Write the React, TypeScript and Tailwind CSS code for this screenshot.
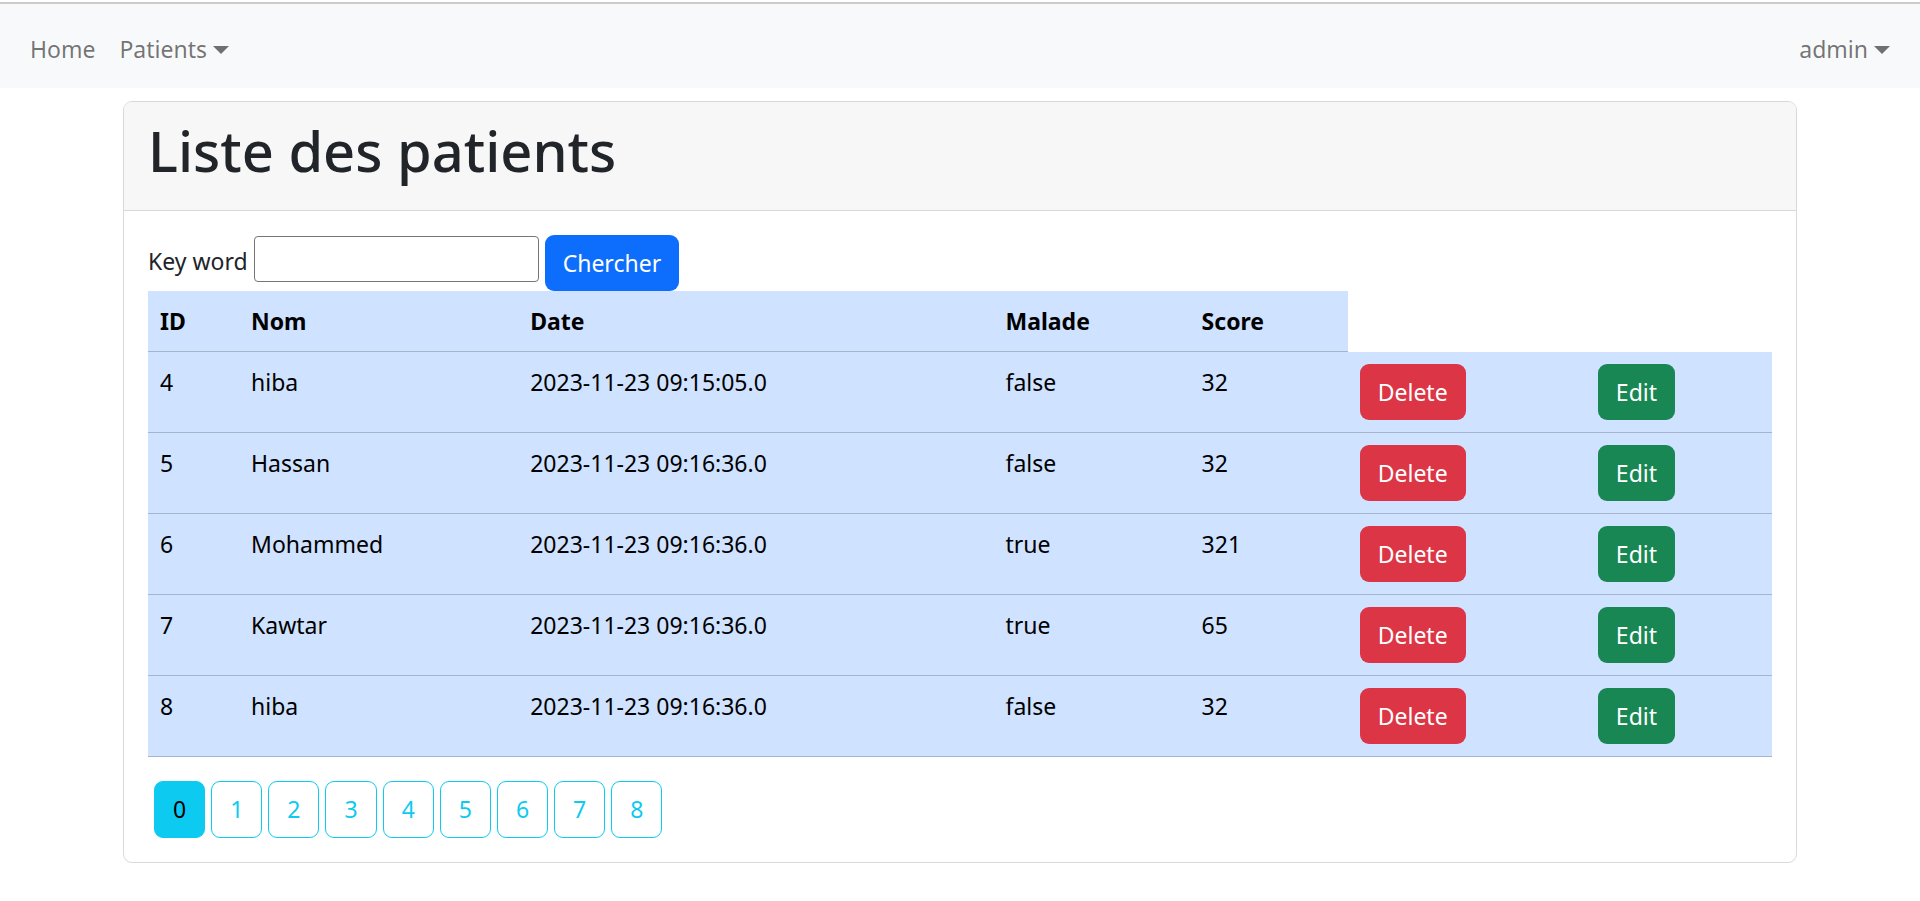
import React from 'react';

const patients = [
  { id: 4, nom: 'hiba', date: '2023-11-23 09:15:05.0', malade: 'false', score: 32 },
  { id: 5, nom: 'Hassan', date: '2023-11-23 09:16:36.0', malade: 'false', score: 32 },
  { id: 6, nom: 'Mohammed', date: '2023-11-23 09:16:36.0', malade: 'true', score: 321 },
  { id: 7, nom: 'Kawtar', date: '2023-11-23 09:16:36.0', malade: 'true', score: 65 },
  { id: 8, nom: 'hiba', date: '2023-11-23 09:16:36.0', malade: 'false', score: 32 },
];

const pages = [0, 1, 2, 3, 4, 5, 6, 7, 8];

const Caret = () => (
  <span className="ml-[6px] inline-block h-0 w-0 border-x-[8px] border-t-[8px] border-x-transparent border-t-current align-[4px]" />
);

const App = () => {
  const th = 'bg-[#cfe2ff] border-b border-[#a6b5cc] px-[12px] py-[12px] text-left font-bold text-black';
  const td = 'bg-[#cfe2ff] border-b border-[#a6b5cc] px-[12px] py-[12px] align-top text-black';

  return (
    <div className="min-h-screen bg-white text-[23px] leading-[36px] text-[#212529] font-['Segoe_UI','Noto_Sans',sans-serif]">
      {/* navbar */}
      <div className="mt-[2px] border-t-2 border-[#cccccc]">
        <nav className="flex h-[84px] items-center justify-between bg-[#f8f9fa] px-[18px] pt-[6px]">
          <div className="flex items-center">
            <a className="px-[12px] py-[12px] text-black/55">Home</a>
            <a className="px-[12px] py-[12px] text-black/55">
              Patients
              <Caret />
            </a>
          </div>
          <a className="px-[12px] py-[12px] text-black/55">
            admin
            <Caret />
          </a>
        </nav>
      </div>

      <div className="mx-auto mt-[13px] w-[1674px] rounded-[9px] border-[1.5px] border-[#d9d9d9]">
        <div className="rounded-t-[8px] border-b-[1.5px] border-[#d9d9d9] bg-[#f7f7f7] px-[24px] py-[12px]">
          <h1 className="mb-[12px] text-[56px] font-medium leading-[72px] text-[#212529]">Liste des patients</h1>
        </div>

        <div className="p-[24px]">
          <form className="flex items-start gap-[6px]">
            <label className="mt-[8px]">Key word</label>
            <input
              type="text"
              className="mt-[1px] h-[46px] w-[285px] rounded-[4px] border-[1.5px] border-[#767676] bg-white px-[3px]"
            />
            <button type="button" className="h-[56px] rounded-[9px] bg-[#0d6efd] px-[18px] text-white">
              Chercher
            </button>
          </form>

          <table className="w-full table-fixed border-collapse">
            <colgroup>
              <col className="w-[91px]" />
              <col className="w-[279px]" />
              <col className="w-[475px]" />
              <col className="w-[196px]" />
              <col className="w-[158px]" />
              <col className="w-[238px]" />
              <col className="w-[186px]" />
            </colgroup>
            <thead>
              <tr>
                <th className={th}>ID</th>
                <th className={th}>Nom</th>
                <th className={th}>Date</th>
                <th className={th}>Malade</th>
                <th className={th}>Score</th>
              </tr>
            </thead>
            <tbody>
              {patients.map((p) => (
                <tr key={p.id}>
                  <td className={td}>{p.id}</td>
                  <td className={td}>{p.nom}</td>
                  <td className={td}>{p.date}</td>
                  <td className={td}>{p.malade}</td>
                  <td className={td}>{p.score}</td>
                  <td className={td}>
                    <button className="h-[56px] rounded-[9px] bg-[#dc3545] px-[18px] text-white">Delete</button>
                  </td>
                  <td className={td}>
                    <button className="h-[56px] rounded-[9px] bg-[#198754] px-[18px] text-white">Edit</button>
                  </td>
                </tr>
              ))}
            </tbody>
          </table>

          <ul className="mt-[24px] flex">
            {pages.map((n) => (
              <li key={n}>
                <button
                  className={
                    n === 0
                      ? 'ml-[6px] h-[57px] rounded-[9px] border-[1.5px] border-[#0dcaf0] bg-[#0dcaf0] px-[18px] text-black'
                      : 'ml-[6px] h-[57px] rounded-[9px] border-[1.5px] border-[#0dcaf0] bg-white px-[18px] text-[#0dcaf0]'
                  }
                >
                  {n}
                </button>
              </li>
            ))}
          </ul>
        </div>
      </div>
    </div>
  );
};

export default App;
